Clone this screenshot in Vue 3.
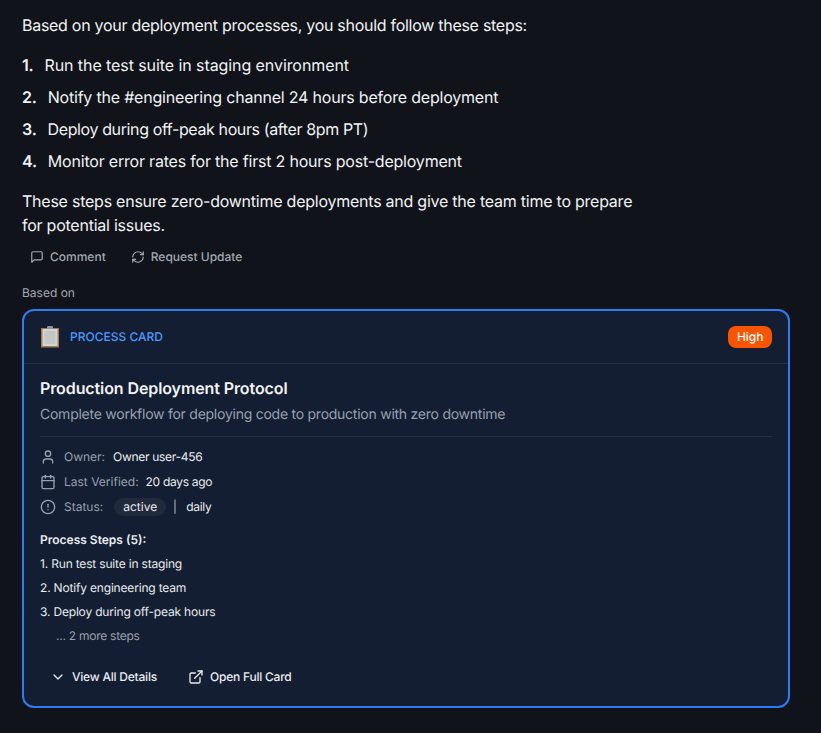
<template>
  <div class="page">
    <p class="para intro">Based on your deployment processes, you should follow these steps:</p>
    <ol class="steps">
      <li v-for="(step, i) in steps" :key="i">
        <span class="num">{{ i + 1 }}.</span>
        <span>{{ step }}</span>
      </li>
    </ol>
    <p class="para closing">These steps ensure zero-downtime deployments and give the team time to prepare<br />for potential issues.</p>

    <div class="actions">
      <button class="action">
        <svg width="14" height="14" viewBox="0 0 24 24" fill="none" stroke="currentColor" stroke-width="2" stroke-linecap="round" stroke-linejoin="round">
          <path d="M21 15a2 2 0 0 1-2 2H7l-4 4V5a2 2 0 0 1 2-2h14a2 2 0 0 1 2 2z" />
        </svg>
        Comment
      </button>
      <button class="action">
        <svg width="14" height="14" viewBox="0 0 24 24" fill="none" stroke="currentColor" stroke-width="2" stroke-linecap="round" stroke-linejoin="round">
          <path d="M3 12a9 9 0 0 1 9-9 9.75 9.75 0 0 1 6.74 2.74L21 8" />
          <path d="M21 3v5h-5" />
          <path d="M21 12a9 9 0 0 1-9 9 9.75 9.75 0 0 1-6.74-2.74L3 16" />
          <path d="M8 16H3v5" />
        </svg>
        Request Update
      </button>
    </div>

    <div class="based">Based on</div>

    <div class="card">
      <div class="card-head">
        <div class="kind">
          <svg class="clipboard" width="20" height="22" viewBox="0 0 20 22">
            <rect x="1" y="2" width="18" height="19.5" fill="#a07c4e" />
            <rect x="2.5" y="3" width="15" height="17" fill="#d4d4d2" />
            <rect x="4.5" y="5" width="11" height="13" fill="#c6c6c4" />
            <rect x="7" y="0" width="6" height="3" rx="1" fill="#8b93a0" />
          </svg>
          <span class="kind-text">PROCESS CARD</span>
        </div>
        <span class="badge">High</span>
      </div>

      <div class="card-body">
        <h3 class="title">Production Deployment Protocol</h3>
        <p class="desc">Complete workflow for deploying code to production with zero downtime</p>

        <div class="meta">
          <div class="meta-row">
            <svg width="16" height="16" viewBox="0 0 24 24" fill="none" stroke="currentColor" stroke-width="2" stroke-linecap="round" stroke-linejoin="round">
              <path d="M19 21v-2a4 4 0 0 0-4-4H9a4 4 0 0 0-4 4v2" />
              <circle cx="12" cy="7" r="4" />
            </svg>
            <span class="label">Owner:</span>
            <span class="value">Owner user-456</span>
          </div>
          <div class="meta-row">
            <svg width="16" height="16" viewBox="0 0 24 24" fill="none" stroke="currentColor" stroke-width="2" stroke-linecap="round" stroke-linejoin="round">
              <path d="M8 2v4" />
              <path d="M16 2v4" />
              <rect x="3" y="4" width="18" height="18" rx="2" />
              <path d="M3 10h18" />
            </svg>
            <span class="label">Last Verified:</span>
            <span class="value verified">20 days ago</span>
          </div>
          <div class="meta-row">
            <svg width="16" height="16" viewBox="0 0 24 24" fill="none" stroke="currentColor" stroke-width="2" stroke-linecap="round" stroke-linejoin="round">
              <circle cx="12" cy="12" r="10" />
              <path d="M12 8v4" />
              <path d="M12 16h.01" />
            </svg>
            <span class="label">Status:</span>
            <span class="pill">active</span>
            <span class="sep">|</span>
            <span class="value">daily</span>
          </div>
        </div>

        <div class="proc">
          <div class="proc-title">Process Steps (5):</div>
          <div v-for="(s, i) in procSteps" :key="i" class="proc-step">{{ i + 1 }}. {{ s }}</div>
          <div class="more">... 2 more steps</div>
        </div>

        <div class="card-actions">
          <button class="card-btn">
            <svg width="16" height="16" viewBox="0 0 24 24" fill="none" stroke="currentColor" stroke-width="2" stroke-linecap="round" stroke-linejoin="round">
              <path d="m6 9 6 6 6-6" />
            </svg>
            View All Details
          </button>
          <button class="card-btn">
            <svg width="16" height="16" viewBox="0 0 24 24" fill="none" stroke="currentColor" stroke-width="2" stroke-linecap="round" stroke-linejoin="round">
              <path d="M18 13v6a2 2 0 0 1-2 2H5a2 2 0 0 1-2-2V8a2 2 0 0 1 2-2h6" />
              <path d="M15 3h6v6" />
              <path d="M10 14 21 3" />
            </svg>
            Open Full Card
          </button>
        </div>
      </div>
    </div>
  </div>
</template>

<script setup>
const steps = [
  'Run the test suite in staging environment',
  'Notify the #engineering channel 24 hours before deployment',
  'Deploy during off-peak hours (after 8pm PT)',
  'Monitor error rates for the first 2 hours post-deployment',
];

const procSteps = [
  'Run test suite in staging',
  'Notify engineering team',
  'Deploy during off-peak hours',
];
</script>

<style>
html,
body {
  background: #10131a;
}
</style>

<style scoped>
.page {
  box-sizing: border-box;
  width: 821px;
  height: 733px;
  padding: 13px 31px 0 22px;
  background: #10131a;
  color: #f1f3f5;
  font-family: Inter, "Liberation Sans", sans-serif;
  text-rendering: geometricPrecision;
  overflow: hidden;
}

.para {
  margin: 0;
  font-size: 16px;
  line-height: 24px;
}

.intro {
  letter-spacing: -0.28px;
}

.closing {
  letter-spacing: -0.24px;
}

.steps {
  margin: 16px 0;
  padding: 0;
  list-style: none;
  font-size: 16px;
  line-height: 24px;
  letter-spacing: -0.2px;
}

.steps li {
  display: flex;
  gap: 11px;
  margin-bottom: 8px;
}

.steps li:nth-child(1) {
  letter-spacing: -0.08px;
}

.steps li:nth-child(3) {
  letter-spacing: -0.38px;
}

.steps li:last-child {
  margin-bottom: 0;
}

.num {
  font-weight: 600;
  letter-spacing: -0.2px;
}

.actions {
  display: flex;
  gap: 9px;
  margin-top: 8px;
}

.action {
  display: flex;
  align-items: center;
  gap: 6px;
  height: 24px;
  padding: 0 8px;
  border: 0;
  background: none;
  color: #a3a8b0;
  font: 500 12px/16px Inter, "Liberation Sans", sans-serif;
  text-rendering: geometricPrecision;
  cursor: pointer;
}

.based {
  margin-top: 16px;
  color: #a3a8b0;
  font-size: 12px;
  line-height: 16px;
}

.card {
  margin-top: 8px;
  border: 2px solid #2f7bf0;
  border-radius: 12px;
  background: #131e33;
  overflow: hidden;
}

.card-head {
  display: flex;
  align-items: center;
  justify-content: space-between;
  height: 52px;
  padding: 0 16px;
  border-bottom: 1px solid #262f42;
}

.kind {
  display: flex;
  align-items: center;
  gap: 10px;
  color: #4c9aff;
  font-size: 12px;
  font-weight: 500;
}

.kind-text {
  padding-bottom: 2px;
}

.badge {
  padding: 3px 8.5px;
  border-radius: 8px;
  background: #f95400;
  color: #fff;
  font-size: 12px;
  font-weight: 500;
  line-height: 16px;
}

.card-body {
  padding: 12px 16px 13px;
}

.title {
  margin: 0;
  color: #f1f3f5;
  font-size: 16px;
  font-weight: 600;
  line-height: 24px;
  letter-spacing: -0.1px;
}

.desc {
  margin: 5px 0 0;
  padding-bottom: 11px;
  border-bottom: 1px solid #262f42;
  color: #98a0ac;
  font-size: 14px;
  line-height: 20px;
  letter-spacing: -0.25px;
}

.meta {
  margin-top: 7px;
  color: #98a0ac;
  font-size: 12px;
}

.meta-row {
  display: flex;
  align-items: center;
  gap: 8px;
  height: 25px;
}

.value {
  color: #e9ebee;
  letter-spacing: -0.3px;
}

.verified {
  margin-left: -1px;
}

.label {
  color: #98a0ac;
}

.pill {
  margin-left: 3px;
  padding: 2px 9px;
  border-radius: 9px;
  background: #212a3a;
  color: #e9ebee;
  line-height: 14px;
}

.sep {
  margin: 0 1px 0 -1px;
  color: #b8bdc5;
  will-change: transform;
}

.proc {
  margin-top: 9px;
  color: #e9ebee;
  font-size: 12px;
  line-height: 24px;
}

.proc-title {
  font-weight: 600;
}

.proc-step {
  letter-spacing: -0.18px;
}

.more {
  padding-left: 16px;
  color: #98a0ac;
  letter-spacing: -0.25px;
}

.card-actions {
  display: flex;
  gap: 11px;
  margin-top: 13px;
}

.card-btn {
  display: flex;
  align-items: center;
  gap: 6px;
  height: 32px;
  padding: 0 10px;
  border: 0;
  background: none;
  color: #e9ebee;
  font: 500 12px/16px Inter, "Liberation Sans", sans-serif;
  letter-spacing: -0.22px;
  text-rendering: geometricPrecision;
  cursor: pointer;
}
</style>
